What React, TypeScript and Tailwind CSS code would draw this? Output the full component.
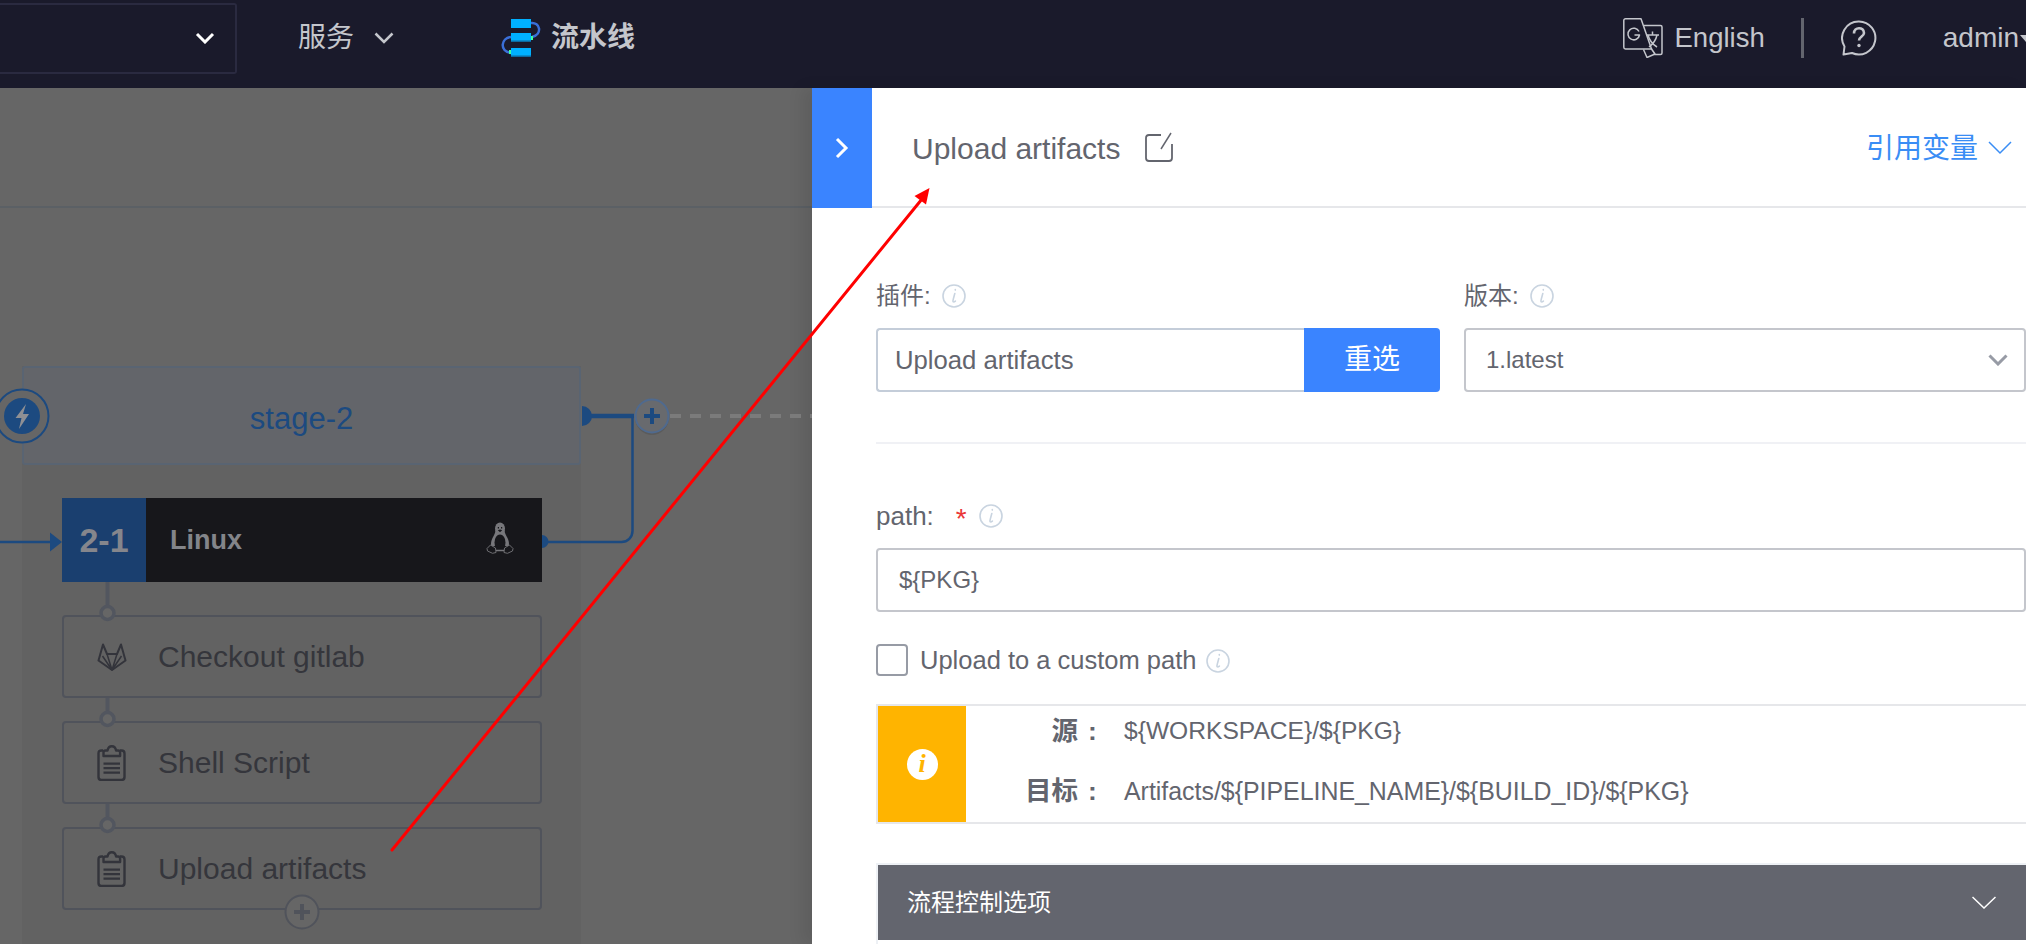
import React from "react";

const FONT = "font-['Liberation_Sans','Noto_Sans_CJK_SC',sans-serif]";

function InfoIcon({ className = "" }: { className?: string }) {
  return (
    <svg viewBox="0 0 24 24" className={"h-6 w-6 shrink-0 " + className} fill="none">
      <circle cx="12" cy="12" r="11" stroke="#c9d4e0" strokeWidth="1.6" />
      <path d="M13.300 5.500v.6M12.800 9.500c-.8 2.800-1.600 5.400-1.900 7.500 0 1.300 1.200 1.200 2.500.1" stroke="#c9d4e0" strokeWidth="1.600" strokeLinecap="round" />
    </svg>
  );
}

function Clipboard() {
  return (
    <svg viewBox="0 0 30 36" className="h-9 w-[30px] shrink-0" fill="none" stroke="#33343b" strokeWidth="2.4">
      <path d="M6 5.500H4.500C2.500 5.500 1.500 6.500 1.500 8.500v23.500c0 2 1 3 3 3h20c2 0 3-1 3-3V8.500c0-2-1-3-3-3H23" />
      <path d="M6.500 11V7.500c0-1.500 1-2 2-2h2C11 3 12.800 1.300 14.800 1.300s3.800 1.700 4.300 4.200h2c1 0 2 .5 2 2V11Z" strokeLinejoin="round" />
      <path d="M6.500 18.700h16.500M6.500 23.200h16.500M6.500 27.700h16.500" strokeWidth="2.200" />
    </svg>
  );
}

function Gitlab() {
  return (
    <svg viewBox="0 0 30 28" className="h-7 w-[30px] shrink-0" fill="none" stroke="#33343b" strokeWidth="2" strokeLinejoin="round">
      <path d="M15 27 1.500 17.500 6 1.500 10 11h10l4-9.500 4.500 16Z" />
      <path d="M15 27 10 11M15 27l5-16M15 27 5.500 13M15 27l9.500-14" strokeWidth="1.500" />
    </svg>
  );
}

function Tux() {
  return (
    <svg viewBox="0 0 28 32" className="-mt-[5px] h-8 w-7 shrink-0" fill="none">
      <ellipse cx="14" cy="6.500" rx="5" ry="6" fill="#77777b" />
      <path d="M9.500 8c0 3-1.500 5-3 8-1.300 2.800-1.800 5.500-1.300 8h17.600c.5-2.500 0-5.200-1.300-8-1.500-3-3-5-3-8Z" fill="#77777b" />
      <ellipse cx="14" cy="20.500" rx="5.500" ry="8" fill="#17171b" />
      <path d="M11.800 5.800h1.200M15 5.800h1.200" stroke="#17171b" strokeWidth="1.400" />
      <path d="M11.800 8.300 14 10.200l2.200-1.900L14 7.500Z" fill="#17171b" />
      <path d="m1 26.500 3.500-3.500 5 3 .5 4.500-3.500.8-5-2.300Zm26 0-3.500-3.500-5 3-.5 4.500 3.500.8 5-2.300Z" fill="#17171b" stroke="#6f6f73" strokeWidth="1" />
      <path d="M10 28.500h8" stroke="#77777b" strokeWidth="1.500" />
    </svg>
  );
}

function StepCard({ label, icon }: { label: string; icon: React.ReactNode }) {
  return (
    <div className="flex h-[83px] w-[480px] items-center rounded-[4px] border-2 border-[#50535b] pl-[33px]">
      {icon}
      <span className="ml-[31px] text-[30px] text-[#35363c]">{label}</span>
    </div>
  );
}

function Header() {
  return (
    <header className="flex h-[88px] shrink-0 items-center bg-[#1a1a2b] pb-3 text-[#c4c6cc]">
      <div className="flex h-[71px] w-[237px] shrink-0 items-center justify-end rounded-r-[3px] border-2 border-l-0 border-[#2a2a40] pr-5">
        <svg width="20" height="12" viewBox="0 0 20 12" fill="none" stroke="#ffffff" strokeWidth="3"><path d="m2 2 8 8 8-8" /></svg>
      </div>
      <div className="ml-[61px] flex items-center text-[28px]">
        <span>服务</span>
        <svg className="ml-5" width="20" height="12" viewBox="0 0 20 12" fill="none" stroke="#c4c6cc" strokeWidth="2.500"><path d="m1.500 1.500 8.500 8.500 8.500-8.500" /></svg>
      </div>
      <svg className="ml-[107px]" width="42" height="40" viewBox="0 0 42 40" fill="none">
        <path d="M30 5c9-1 12 11 1 14M10 19C0 20-2 33 10 35" stroke="#3a6fd8" strokeWidth="2.500" />
        <rect x="10" y="1" width="20" height="9" fill="#00b0ff" />
        <rect x="10" y="15" width="20" height="9" fill="#00b0ff" />
        <rect x="10" y="22.500" width="20" height="1.500" fill="#0c6aa0" />
        <rect x="10" y="30" width="20" height="9" fill="#00b0ff" />
        <rect x="10" y="37.500" width="20" height="1.500" fill="#0c6aa0" />
        <rect x="30" y="18" width="2" height="4" fill="#3dff9e" />
        <rect x="8" y="32" width="2" height="4" fill="#3dff9e" />
      </svg>
      <span className="ml-2 text-[28px] font-bold">流水线</span>

      <div className="ml-auto flex items-center">
        <svg width="40" height="40" viewBox="0 0 40 40" fill="none" stroke="#c4c6cc" strokeWidth="1.500" strokeLinejoin="round">
          <path d="M2.500 .8H18L28.500 31H2.500a1.700 1.700 0 0 1-1.700-1.700V2.500A1.700 1.700 0 0 1 2.500.8Z" />
          <path d="M21 7.500h16.500a1.500 1.500 0 0 1 1.500 1.500v26a1.500 1.500 0 0 1-1.500 1.500H30M20.500 31.500l3.500 8 8-3.500-3.500-5" />
          <path d="M16 13.500a5.800 5.800 0 1 0 .5 3.500h-5" />
          <path d="M23 17h13M29.500 13.500V17M34 17c-1 5-4 9-8 12M25 17c1 4 4 9 9 12" />
        </svg>
        <span className="ml-3 text-[27.500px]">English</span>
        <div className="ml-[36px] h-10 w-[3px] bg-[#63656e]" />
        <svg className="ml-[37px]" width="36" height="36" viewBox="0 0 36 36" fill="none" stroke="#c4c6cc" strokeWidth="2">
          <path d="M18 1.500a16.500 16.500 0 1 1-7 31.500l-8.500 1.500 1-8A16.500 16.500 0 0 1 18 1.500Z" strokeLinejoin="round" />
          <path d="M13 13.500c0-7 10-7 10-.5 0 3.500-5 3.500-5 7.500" strokeWidth="2.600" />
          <circle cx="18" cy="25.500" r="1.700" fill="#c4c6cc" stroke="none" />
        </svg>
        <span className="ml-[66px] text-[28px]">admin</span>
        <span className="ml-[1px] w-[6px] overflow-hidden">
          <span className="block h-0 w-0 border-x-[6px] border-t-[7px] border-x-transparent border-t-[#c4c6cc]" />
        </span>
      </div>
    </header>
  );
}

function Canvas() {
  return (
    <section className="flex w-[812px] shrink-0 flex-col bg-[#666666]">
      <div className="h-[120px] shrink-0 border-b-2 border-[#5b6065] bg-[#666666]" />
      <div className="ml-[22px] mt-[158px] flex w-[559px] flex-1 flex-col bg-[#626262]">
        <div className="flex h-[99px] shrink-0 items-center justify-center rounded-[3px] border-2 border-[#596472] bg-[#63656a] pt-[7px] text-[31px] text-[#1c4a80]">
          stage-2
        </div>
        <div className="ml-10 mt-[33px] flex flex-col">
          <div className="flex h-[84px] w-[480px] items-center bg-[#17171b]">
            <div className="flex h-full w-[84px] items-center justify-center bg-[#1a3f6f] text-[34px] font-bold text-[#85868c]">2-1</div>
            <span className="ml-[24px] text-[27px] font-bold text-[#83858a]">Linux</span>
            <span className="ml-auto mr-[28px]"><Tux /></span>
          </div>
          <div className="mt-[33px] flex flex-col gap-[23px]">
            <StepCard label="Checkout gitlab" icon={<Gitlab />} />
            <StepCard label="Shell Script" icon={<Clipboard />} />
            <StepCard label="Upload artifacts" icon={<Clipboard />} />
          </div>
        </div>
      </div>
    </section>
  );
}

function Panel() {
  return (
    <section className="relative flex min-w-0 flex-1 flex-col bg-white text-[#63656e] shadow-[-10px_0_14px_rgba(0,0,0,0.08)]">
      <div className="flex h-[120px] shrink-0">
        <div className="flex w-[60px] shrink-0 items-center justify-center bg-[#3a84ff]">
          <svg width="14" height="22" viewBox="0 0 14 22" fill="none" stroke="#ffffff" strokeWidth="3"><path d="m2 2 9 9-9 9" /></svg>
        </div>
        <div className="flex flex-1 items-center border-b-2 border-[#e6e7ea]">
          <span className="ml-[40px] pt-[3px] text-[30px]">Upload artifacts</span>
          <svg className="ml-[25px]" width="28" height="30" viewBox="0 0 28 30" fill="none" stroke="#63656e" strokeWidth="1.800">
            <path d="M16 3H4a3 3 0 0 0-3 3v20a3 3 0 0 0 3 3h20a3 3 0 0 0 3-3V12" />
            <path d="m26 1-10 16" strokeWidth="1.500" />
          </svg>
          <span className="ml-auto pt-[3px] text-[28px] text-[#3a8df5]">引用变量</span>
          <svg className="ml-[10px] mr-[14px] mt-[2px]" width="24" height="14" viewBox="0 0 24 14" fill="none" stroke="#3a8df5" strokeWidth="1.500"><path d="m1 1 11 11L23 1" /></svg>
        </div>
      </div>

      <div className="flex flex-1 flex-col pl-[64px]">
        <div className="flex gap-6 pt-[76px]">
          <div className="w-[564px] shrink-0">
            <div className="flex h-6 items-center text-[24px]">
              <span>插件:</span>
              <InfoIcon className="ml-[11px]" />
            </div>
            <div className="mt-[20px] flex h-16">
              <div className="flex flex-1 items-center rounded-l-[4px] border-2 border-r-0 border-[#c4cdd9] pl-[17px] text-[25.700px]">Upload artifacts</div>
              <div className="flex w-[136px] items-center justify-center rounded-r-[4px] bg-[#3a84ff] text-[28px] text-white">重选</div>
            </div>
          </div>
          <div className="min-w-0 flex-1">
            <div className="flex h-6 items-center text-[24px]">
              <span>版本:</span>
              <InfoIcon className="ml-[11px]" />
            </div>
            <div className="mt-[20px] flex h-16 items-center justify-between rounded-[4px] border-2 border-[#c4c6cc] pl-5 pr-4 text-[24px]">
              <span>1.latest</span>
              <svg width="20" height="12" viewBox="0 0 20 12" fill="none" stroke="#979ba5" strokeWidth="3"><path d="m1.500 1.500 8.500 8.500 8.500-8.500" /></svg>
            </div>
          </div>
        </div>

        <div className="mt-[50px] h-[2px] shrink-0 bg-[#f0f1f5]" />

        <div className="mt-[60px] flex h-6 items-center text-[26px]">
          <span>path:</span>
          <span className="ml-[22px] mt-[6px] text-[28px] leading-none text-[#ea3636]">*</span>
          <InfoIcon className="ml-[12px]" />
        </div>
        <div className="mt-[20px] flex h-16 items-center rounded-[4px] border-2 border-[#c4c6cc] pl-[21px] text-[24px]">{"${PKG}"}</div>

        <div className="mt-[32px] flex h-8 items-center">
          <div className="h-8 w-8 rounded-[4px] border-2 border-[#979ba5]" />
          <span className="ml-[12px] text-[25.500px]">Upload to a custom path</span>
          <InfoIcon className="ml-[10px] mt-[2px]" />
        </div>

        <div className="mt-[28px] flex h-[120px] border-2 border-r-0 border-[#e6e7ea]">
          <div className="flex w-[88px] shrink-0 items-center justify-center bg-[#ffb400]">
            <div className="flex h-[31px] w-[31px] items-center justify-center rounded-full bg-white font-['Liberation_Serif',serif] text-[26px] font-bold italic leading-none text-[#ffb400]">i</div>
          </div>
          <div className="flex flex-col justify-center gap-[28px] pb-[6px]">
            <div className="flex items-center">
              <span className="w-[112px] text-right text-[26.500px] font-bold leading-[32px]">源</span>
              <span className="w-[46px] pl-[10px] text-[26.500px] font-bold leading-[32px]">:</span>
              <span className="text-[24.600px] leading-[32px]">{"${WORKSPACE}/${PKG}"}</span>
            </div>
            <div className="flex items-center">
              <span className="w-[112px] text-right text-[26.500px] font-bold leading-[32px]">目标</span>
              <span className="w-[46px] pl-[10px] text-[26.500px] font-bold leading-[32px]">:</span>
              <span className="text-[24.900px] leading-[32px]">{"Artifacts/${PIPELINE_NAME}/${BUILD_ID}/${PKG}"}</span>
            </div>
          </div>
        </div>

        <div className="mt-[39px] flex flex-1 flex-col border-t-2 border-l-2 border-[#eef1f5]">
          <div className="flex h-[75px] items-center justify-between bg-[#63656e] pl-[29px] pr-[30px] text-[24px] text-white">
            <span>流程控制选项</span>
            <svg width="24" height="13" viewBox="0 0 24 13" fill="none" stroke="#ffffff" strokeWidth="1.500"><path d="m.500 1 11.500 11L23.500 1" /></svg>
          </div>
        </div>
      </div>
    </section>
  );
}

function Overlay() {
  return (
    <svg className="pointer-events-none absolute left-0 top-0" width="2026" height="944" viewBox="0 0 2026 944" fill="none">
      {/* trigger badge on the stage */}
      <circle cx="22" cy="416" r="26.500" fill="#666666" stroke="#1c4a80" strokeWidth="2" />
      <circle cx="22" cy="416" r="18" fill="#1c4a80" />
      <path d="M26 404 15.500 418h6l-2.500 11 10-15h-6Z" fill="#8f9094" />
      {/* stage to plus */}
      <path d="M582 406a10 10 0 0 1 0 20Z" fill="#1c4a80" />
      <path d="M590 416h44" stroke="#1c4a80" strokeWidth="4.500" />
      <path d="M670 416h142" stroke="#7b7b7b" strokeWidth="4" strokeDasharray="11 9" />
      {/* job to plus */}
      <path d="M632.500 416v115a11 11 0 0 1-11 11H546" stroke="#1c4a80" strokeWidth="2.500" />
      <path d="M542 535a6.500 6.500 0 0 1 0 13Z" fill="#1c4a80" />
      {/* plus */}
      <circle cx="652" cy="418" r="17" fill="#000000" opacity="0.1" />
      <circle cx="652" cy="416" r="16.500" fill="#686a6e" stroke="#4f6a8f" strokeWidth="2" />
      <path d="M652 408v16M644 416h16" stroke="#1c4a80" strokeWidth="4" />
      {/* incoming */}
      <path d="M0 542h52" stroke="#1c4a80" strokeWidth="2.500" />
      <path d="M50 532.500 62 542l-12 9.500Z" fill="#1c4a80" />
      {/* step connectors */}
      <path d="M107.500 582v24M107.500 698v16M107.500 804v16" stroke="#52565f" strokeWidth="4" />
      {[613, 719, 825].map((y) => (
        <circle key={y} cx="107.500" cy={y} r="6.500" fill="#666666" stroke="#52565f" strokeWidth="3.500" />
      ))}
      {/* add step */}
      <circle cx="302" cy="912" r="16.500" fill="#666666" stroke="#50535b" strokeWidth="2" />
      <path d="M302 904v16M294 912h16" stroke="#50535b" strokeWidth="4" />
      {/* red annotation arrow */}
      <path d="M392 850 922 199" stroke="#ff0000" strokeWidth="3" strokeLinecap="round" />
      <path d="M929.500 188 926 204.500l-11.500-8.500Z" fill="#ff0000" />
    </svg>
  );
}

export default function App() {
  return (
    <div className={"relative flex h-[944px] w-[2026px] flex-col overflow-hidden " + FONT}>
      <Header />
      <main className="flex min-h-0 flex-1">
        <Canvas />
        <Panel />
      </main>
      <Overlay />
    </div>
  );
}
